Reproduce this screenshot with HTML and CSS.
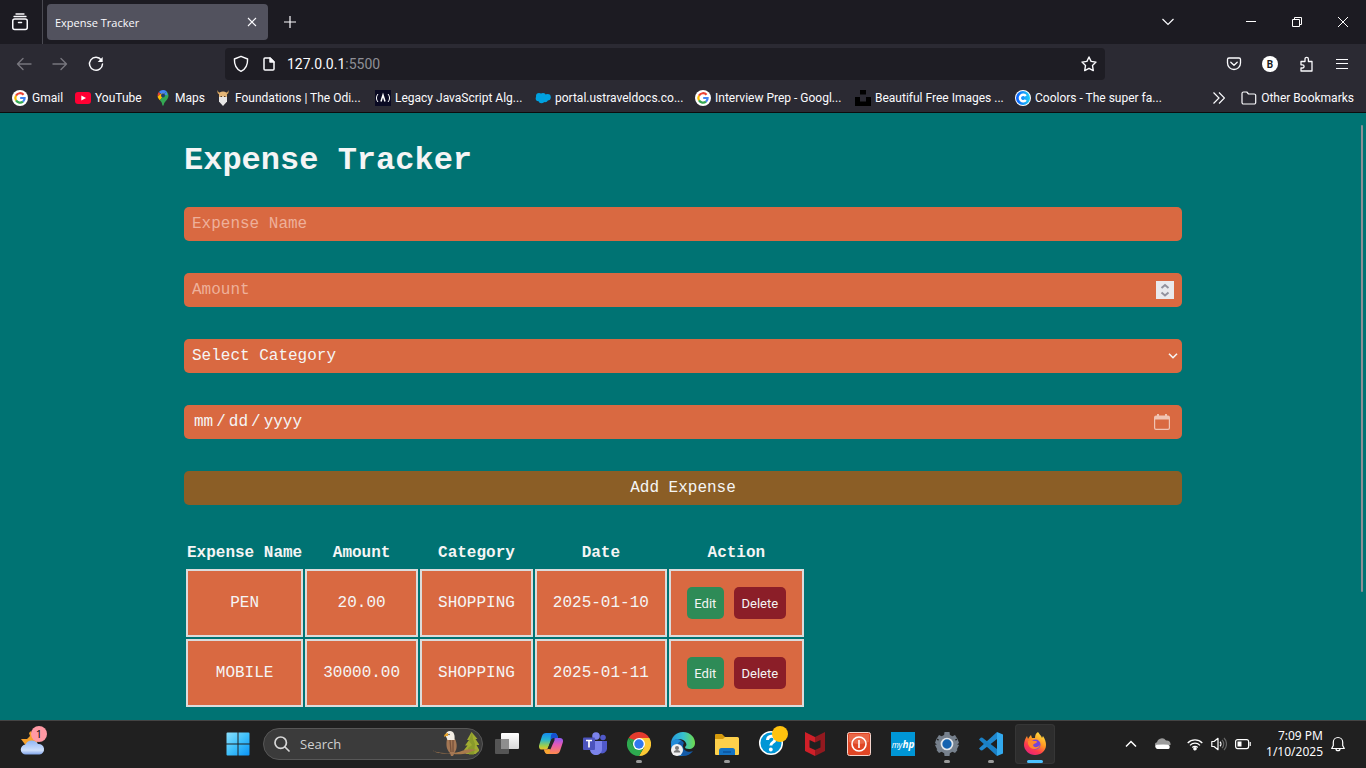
FILE: index.html
```html
<!DOCTYPE html>
<html lang="en">
<head>
<meta charset="utf-8">
<meta name="viewport" content="width=device-width, initial-scale=1">
<title>Expense Tracker</title>
<link rel="stylesheet" href="styles.css">
</head>
<body>
<header class="browser">
  <div class="titlebar">
    <button class="recent" aria-label="Recent browsing">
      <svg width="18" height="18" viewBox="0 0 18 18" fill="none" stroke="#fbfbfe" stroke-width="1.5" stroke-linecap="round"><rect x="1.75" y="6" width="14.5" height="10.5" rx="2"/><path d="M3 3.5h12M5 1h8" stroke-width="1.3"/><path d="M7.5 9.5h3"/></svg>
    </button>
    <div class="tab">
      <span class="tab-title">Expense Tracker</span>
      <button class="tab-close" aria-label="Close tab"><svg width="10" height="10" viewBox="0 0 10 10" stroke="#fbfbfe" stroke-width="1.1"><path d="M1 1l8 8M9 1l-8 8"/></svg></button>
    </div>
    <button class="new-tab" aria-label="New tab"><svg width="14" height="14" viewBox="0 0 14 14" stroke="#fbfbfe" stroke-width="1.2"><path d="M7 1v12M1 7h12"/></svg></button>
    <div class="window-controls">
      <button class="list-tabs" aria-label="List all tabs"><svg width="12" height="8" viewBox="0 0 12 8" fill="none" stroke="#fbfbfe" stroke-width="1.2"><path d="M.5 1L6 6.500 11.500 1"/></svg></button>
      <button aria-label="Minimize"><svg width="10" height="10" viewBox="0 0 10 10" fill="#fff"><path d="M0 4h10v1H0z"/></svg></button>
      <button aria-label="Restore"><svg width="10" height="10" viewBox="0 0 10 10" fill="none" stroke="#fff"><path d="M.5 2.500h7v7h-7zM2.500 2.500v-2h7v7h-2"/></svg></button>
      <button aria-label="Close"><svg width="10" height="10" viewBox="0 0 10 10" stroke="#fff"><path d="M0 0l10 10M10 0L0 10"/></svg></button>
    </div>
  </div>

  <div class="navbar">
    <button class="tool dim" aria-label="Back"><svg width="16" height="16" viewBox="0 0 16 16" fill="none" stroke="currentColor" stroke-width="1.4" stroke-linecap="round" stroke-linejoin="round"><path d="M15 8H1.500M7 2.500L1.500 8 7 13.500"/></svg></button>
    <button class="tool dim" aria-label="Forward"><svg width="16" height="16" viewBox="0 0 16 16" fill="none" stroke="currentColor" stroke-width="1.4" stroke-linecap="round" stroke-linejoin="round"><path d="M1 8h13.500M9 2.500L14.500 8 9 13.500"/></svg></button>
    <button class="tool" aria-label="Reload"><svg width="16" height="16" viewBox="0 0 16 16" fill="none" stroke="currentColor" stroke-width="1.5" stroke-linecap="round"><path d="M13.300 4A6.500 6.500 0 1 0 14.500 8"/><path d="M14.700 1v5H9.700z" fill="currentColor" stroke="none"/></svg></button>
    <div class="urlbar">
      <svg width="16" height="18" viewBox="0 0 16 18" fill="none" stroke="#fbfbfe" stroke-width="1.4" stroke-linejoin="round"><path d="M8 1.300L14.600 4c.2 6-1.600 10-6.600 12.400C3 14 1.200 10 1.400 4z"/></svg>
      <svg class="page-icon" width="12" height="14" viewBox="0 0 12 14" fill="none" stroke="#fbfbfe" stroke-width="1.5" stroke-linejoin="round"><path d="M1 2a1 1 0 0 1 1-1h5l4 4v7a1 1 0 0 1-1 1H2a1 1 0 0 1-1-1z"/><path d="M7 1v4h4z" fill="#fbfbfe"/></svg>
      <span class="url">127.0.0.1<span class="port">:5500</span></span>
      <button class="star" aria-label="Bookmark this page"><svg width="16" height="16" viewBox="0 0 16 16" fill="none" stroke="#fbfbfe" stroke-width="1.4" stroke-linejoin="round"><path d="M8 1l2.100 4.400 4.900.7-3.500 3.500.8 5L8 12.300l-4.300 2.300.8-5L1 6.100l4.900-.7z"/></svg></button>
    </div>
    <button class="tool" aria-label="Save to Pocket"><svg width="16" height="16" viewBox="0 0 16 16" fill="none" stroke="currentColor" stroke-width="1.3" stroke-linecap="round" stroke-linejoin="round"><path d="M3 2h10a1.500 1.500 0 0 1 1.500 1.500V7a6.500 6.500 0 0 1-13 0V3.500A1.500 1.500 0 0 1 3 2z"/><path d="M4.800 6.300L8 9.300l3.200-3"/></svg></button>
    <button class="tool" aria-label="Account"><span class="avatar">B</span></button>
    <button class="tool" aria-label="Extensions"><svg width="16" height="16" viewBox="0 0 16 16" fill="none" stroke="currentColor" stroke-width="1.300" stroke-linejoin="round"><path d="M3 5.500h4V3a1.700 1.700 0 0 1 3.400 0v2.500H14V15H3v-3h1.500a1.500 1.500 0 0 0 0-3.200H3z"/></svg></button>
    <button class="tool" aria-label="Menu"><svg width="12" height="12" viewBox="0 0 12 12" fill="currentColor"><path d="M0 1h12v1H0zM0 5h12v1H0zM0 10h12v1H0z"/></svg></button>
  </div>

  <nav class="bookmarks" aria-label="Bookmarks">
    <a class="bookmark" href="#"><svg width="16" height="16" viewBox="0 0 16 16"><circle cx="8" cy="8" r="8" fill="#fff"/><g fill="none" stroke-width="2.200"><path d="M11.600 4.800A4.700 4.700 0 0 0 4 5.600" stroke="#ea4335"/><path d="M4 5.600a4.700 4.700 0 0 0 0 4.800" stroke="#fbbc05"/><path d="M4 10.400a4.700 4.700 0 0 0 7 1.200" stroke="#34a853"/><path d="M11 11.600A4.500 4.500 0 0 0 12.600 8H8.200" stroke="#4285f4"/></g></svg><span>Gmail</span></a>
    <a class="bookmark bookmark-mid" href="#"><svg width="16" height="16" viewBox="0 0 16 16"><rect y="2" width="16" height="12" rx="3" fill="#ff0033"/><path d="M6.300 5.400v5.200L11 8z" fill="#fff"/></svg><span>YouTube</span></a>
    <a class="bookmark bookmark-short" href="#"><svg width="16" height="16" viewBox="0 0 16 16"><path d="M8 0a5.500 5.500 0 0 0-4.200 2L8 5.500l3.500-4.300A5.500 5.500 0 0 0 8 0z" fill="#4285f4"/><path d="M3.800 2A5.500 5.500 0 0 0 2.600 6.500L5.600 4z" fill="#ea4335"/><path d="M2.600 6.500c.3 1.700 1.300 2.600 2.300 3.800L10 4.500 8 3.500 5.600 4z" fill="#fbbc04"/><path d="M11.500 1.200L4.900 10.300C6.600 12.300 7 13 7.300 15c.2 1 1.200 1 1.400 0 .5-3.600 4.800-5.300 4.800-9.500a5.500 5.500 0 0 0-2-4.300z" fill="#34a853"/><path d="M11.500 1.200L9 4.500l3.500 1z" fill="#4285f4"/><circle cx="8" cy="5.400" r="2" fill="#203c6b"/></svg><span>Maps</span></a>
    <a class="bookmark bookmark-long" href="#"><svg width="16" height="16" viewBox="0 0 16 16"><path d="M2.500 0C2 3 3 4 4.500 4.500h7C13 4 14 3 13.500 0 12.800 2 12 2.600 10.500 2.500h-5C4 2.600 3.200 2 2.500 0z" fill="#d4a05a"/><path d="M4 5a4 3.500 0 0 1 8 0v3H4z" fill="#e5b678"/><path d="M4 7l4-.5 4 .5v4.500L8 16l-4-4.500z" fill="#e8e6e6"/><path d="M5.500 6h1.500v1H5.500zM9 6h1.500v1H9z" fill="#5c4026"/></svg><span>Foundations | The Odi...</span></a>
    <a class="bookmark bookmark-long" href="#"><svg width="16" height="16" viewBox="0 0 16 16"><path d="M0 0h16v16H0z" fill="#0a0a23"/><g fill="none" stroke="#fff" stroke-width="1"><path d="M3 4C1 6.500 1 9.500 3 12M13 4c2 2.500 2 5.500 0 8"/><path d="M6 11.500L8 5l2 6.500M8 5v3" stroke-width="1.500"/></g></svg><span>Legacy JavaScript Alg...</span></a>
    <a class="bookmark bookmark-long" href="#"><svg width="16" height="16" viewBox="0 0 16 16" fill="#00a1e0"><circle cx="4" cy="6" r="3"/><circle cx="8" cy="5.800" r="2.800"/><circle cx="12.600" cy="7.300" r="3.200"/><circle cx="3.400" cy="8.500" r="2.700"/><circle cx="6.500" cy="10.300" r="3"/><circle cx="10" cy="9.500" r="2.800"/></svg><span>portal.ustraveldocs.co...</span></a>
    <a class="bookmark bookmark-long" href="#"><svg width="16" height="16" viewBox="0 0 16 16"><circle cx="8" cy="8" r="8" fill="#fff"/><g fill="none" stroke-width="2.200"><path d="M11.600 4.800A4.700 4.700 0 0 0 4 5.600" stroke="#ea4335"/><path d="M4 5.600a4.700 4.700 0 0 0 0 4.800" stroke="#fbbc05"/><path d="M4 10.400a4.700 4.700 0 0 0 7 1.200" stroke="#34a853"/><path d="M11 11.600A4.500 4.500 0 0 0 12.600 8H8.200" stroke="#4285f4"/></g></svg><span>Interview Prep - Googl...</span></a>
    <a class="bookmark bookmark-long" href="#"><svg width="16" height="16" viewBox="0 0 16 16"><path d="M5 0h6v4.500H5zM0 7h5v4.500h6V7h5v9H0z" fill="#000"/></svg><span>Beautiful Free Images ...</span></a>
    <a class="bookmark bookmark-long" href="#"><svg width="16" height="16" viewBox="0 0 16 16"><defs><linearGradient id="coolors"><stop stop-color="#0a5cff"/><stop offset="1" stop-color="#20d0f5"/></linearGradient></defs><circle cx="8" cy="8" r="8" fill="#fff"/><circle cx="8" cy="8" r="7" fill="url(#coolors)"/><path d="M10.800 6A3.300 3.300 0 1 0 10.800 10" fill="none" stroke="#fff" stroke-width="2.400"/></svg><span>Coolors - The super fa...</span></a>
    <button class="more" aria-label="More bookmarks"><svg width="12" height="12" viewBox="0 0 12 12" fill="none" stroke="#fbfbfe" stroke-width="1.200"><path d="M.5.500L6 6 .5 11.500M6 .5L11.500 6 6 11.500"/></svg></button>
    <a class="bookmark bookmark-folder" href="#"><svg width="16" height="16" viewBox="0 0 16 16" fill="none" stroke="#fbfbfe" stroke-width="1.200" stroke-linejoin="round"><path d="M1 3.500A1.500 1.500 0 0 1 2.500 2h3.300L7.500 4h5.700A1.500 1.500 0 0 1 14.700 5.500v7a1.500 1.500 0 0 1-1.500 1.500H2.500A1.500 1.500 0 0 1 1 12.500z"/></svg><span>Other Bookmarks</span></a>
  </nav>
</header>

<main class="page">
  <div class="container">
    <h1>Expense Tracker</h1>
    <form class="expense-form">
      <div class="field"><input class="control" type="text" placeholder="Expense Name" aria-label="Expense Name"></div>
      <div class="field">
        <input class="control" type="number" placeholder="Amount" aria-label="Amount">
        <svg class="field-icon spinner" width="18" height="18" viewBox="0 0 18 18" fill="none" stroke="#92919d" stroke-width="2"><path d="M0 0h18v18H0z" fill="#e9e9ed" stroke="none"/><path d="M5.500 7L9 4l3.500 3M5.500 11.500L9 14.500l3.500-3"/></svg>
      </div>
      <div class="field">
        <select class="control" aria-label="Category"><option>Select Category</option><option>SHOPPING</option></select>
        <svg class="field-icon arrow" width="10" height="6" viewBox="0 0 10 6" fill="none" stroke="#f5f5f5" stroke-width="1.600"><path d="M1 .700L5 4.700 9 .700"/></svg>
      </div>
      <div class="field">
        <input class="control date" type="date" aria-label="Date">
        <svg class="field-icon calendar" width="16" height="16" viewBox="0 0 16 16" fill="#f0c3b3"><path fill-rule="evenodd" d="M3 0h2v1.500h6V0h2v1.500h1a2 2 0 0 1 2 2V14a2 2 0 0 1-2 2H2a2 2 0 0 1-2-2V3.500a2 2 0 0 1 2-2h1zM1.200 5.500V14a.8.8 0 0 0 .8.800h12a.8.8 0 0 0 .8-.8V5.500z"/></svg>
      </div>
      <button class="control submit" type="button">Add Expense</button>
    </form>

    <table class="expenses">
      <thead>
        <tr><th>Expense Name</th><th>Amount</th><th>Category</th><th>Date</th><th>Action</th></tr>
      </thead>
      <tbody>
        <tr><td>PEN</td><td>20.00</td><td>SHOPPING</td><td>2025-01-10</td><td><div class="actions"><button class="action edit">Edit</button><button class="action delete">Delete</button></div></td></tr>
        <tr><td>MOBILE</td><td>30000.00</td><td>SHOPPING</td><td>2025-01-11</td><td><div class="actions"><button class="action edit">Edit</button><button class="action delete">Delete</button></div></td></tr>
      </tbody>
    </table>
  </div>
  <div class="scroll-thumb"></div>
</main>

<footer class="taskbar">
  <div class="widgets">
    <button class="weather" aria-label="Weather">
      <svg width="26" height="26" viewBox="0 0 26 26"><defs><linearGradient id="cloud" x2="0" y2="1"><stop stop-color="#8fb5f5"/><stop offset=".7" stop-color="#cfe0fb"/><stop offset="1" stop-color="#7fa3e8"/></linearGradient></defs><path d="M11 2l2 5 6 1-3 9H6l-2-3-3-4 6 0 3-3-1-3z" fill="#f5a12c"/><path d="M6 25.500a5 5 0 0 1-.5-10A7 7 0 0 1 18 15a5.300 5.300 0 0 1 1.500 10.500z" fill="url(#cloud)"/></svg>
      <span class="badge">1</span>
    </button>
  </div>
  <div class="apps">
    <button class="app" aria-label="Start"><svg width="24" height="24" viewBox="0 0 24 24"><defs><linearGradient id="win" x2="1" y2="1"><stop stop-color="#8be0fd"/><stop offset=".5" stop-color="#3fc0fb"/><stop offset="1" stop-color="#0a93f5"/></linearGradient></defs><path d="M.500 1.500a1 1 0 0 1 1-1h10v11H.5zM12.500.5h10a1 1 0 0 1 1 1v10h-11zM.5 12.500h11v11h-10a1 1 0 0 1-1-1zM12.500 12.500h11v10a1 1 0 0 1-1 1h-10z" fill="url(#win)"/></svg></button>
    <label class="search">
      <svg width="16" height="16" viewBox="0 0 16 16" fill="none" stroke="#d8d8d8" stroke-width="1.700" stroke-linecap="round"><circle cx="6.700" cy="6.700" r="5.700"/><path d="M11 11l4 4"/></svg>
      <input type="text" placeholder="Search" aria-label="Search">
      <svg width="46" height="26" viewBox="0 0 46 26"><path d="M38.500 1l6 7-2 0 4 6-3 0 3 5.500-4 3.500H33l-2-4 3.500-4.500h-2.500l4-5.500h-2z" fill="#a0ac31"/><path d="M39 1l1 7 2 5-1 11h-5l-1-7 4-3-3-4z" fill="#7c8d28" opacity=".6"/><path d="M0 20c10 3 22 3 30-.5 5-2 10-1.500 15-.5-7 0-9 4-15 4-8 1-11-1-17-.5-5 0-9 0-13-3z" fill="#a8794c"/><path d="M14 8h8c2.500 5 2 10 0 13l-1 2-1 2h-2l-1-3c-4-4-4-9-3-14z" fill="#a47754"/><path d="M17 9l1 12M20 9l0 12" stroke="#77513a" stroke-width="1.300"/><path d="M12.500 4.500C12.500 2 14.500 0 17 0c4 0 5 4 4.500 9H14.500z" fill="#f4eee4"/><path d="M15 2c-2 0-4 1-4 4 1-1 2-1 4-1z" fill="#e6a42c"/><circle cx="16" cy="3.500" r=".7" fill="#222"/></svg>
    </label>
    <button class="app" aria-label="Task View"><svg width="24" height="24" viewBox="0 0 24 24"><defs><linearGradient id="tv" x2="0" y2="1"><stop stop-color="#fff"/><stop offset="1" stop-color="#d8d8d8"/></linearGradient></defs><rect x="6" y="1" width="18" height="16" rx="1" fill="url(#tv)"/><rect y="7" width="14" height="15" rx="1" fill="#555"/><path d="M6 7h8v10H6z" fill="#8e8e8e"/></svg></button>
    <button class="app" aria-label="Copilot"><svg width="24" height="24" viewBox="0 0 24 24"><defs><linearGradient id="cpa" x2="0" y2="1"><stop stop-color="#148cf0"/><stop offset=".4" stop-color="#26b5d0"/><stop offset=".8" stop-color="#a6cf45"/><stop offset="1" stop-color="#f0c02c"/></linearGradient><linearGradient id="cpb" x2="0" y2="1"><stop stop-color="#8a5cf5"/><stop offset=".4" stop-color="#e458b8"/><stop offset="1" stop-color="#ff8a4c"/></linearGradient></defs><path d="M7 1h8c2 0 3 1 3.500 3L19 6h-4c-2 0-3 1-3.500 3L9.500 15c-.7 2-1.500 2.500-3.500 2.500H3c-2.500 0-3.500-2-2.800-4.500L3 4c.7-2 2-3 4-3z" fill="url(#cpa)"/><path d="M15 1c2 0 3 1 3.500 3L19 6h-4c-2 0-3 1-3.500 3l.3-4.500C12 2.500 13 1 15 1z" fill="#154fd0"/><path d="M17 22H9c-2 0-3-1-3.500-3L5 17.500h3c2 0 3-1 3.500-3l2.500-6C14.700 6.500 16 6 18 6h3c2.500 0 3.500 2 2.800 4.500L21 19c-.7 2-2 3-4 3z" fill="url(#cpb)"/><path d="M9 22c-2 0-3-1-3.500-3L5 17.500h3c2 0 3-1 3.500-3l-.5 5c0 1.500-1 2.500-2 2.500z" fill="#f8a630"/><path d="M14.500 7L10 17" stroke="#262626" stroke-width="3"/></svg></button>
    <button class="app" aria-label="Teams"><svg width="24" height="24" viewBox="0 0 24 24"><circle cx="20" cy="5.500" r="2.800" fill="#5059c9"/><path d="M16 9h8v8a5 5 0 0 1-7 4z" fill="#5059c9"/><circle cx="13" cy="4" r="3.800" fill="#7b83eb"/><path d="M7 9h12v8c0 8-12 8-12 0z" fill="#7b83eb"/><rect y="5.500" width="12" height="12.500" rx="1" fill="#4b53bc"/><path d="M3 8.500h6M6 8.500v7" stroke="#fff" stroke-width="1.700"/></svg></button>
    <button class="app running" aria-label="Chrome"><svg width="24" height="24" viewBox="0 0 24 24"><path d="M12 12L1.600 6A12 12 0 0 1 22.400 6z" fill="#e33b2e"/><path d="M12 12V6h10.400A12 12 0 0 1 12 24l5.200-9z" fill="#fcc934"/><path d="M12 12l5.200 3L12 24A12 12 0 0 1 1.600 6l5.200 9z" fill="#2da94f"/><path d="M1.600 6L6.800 15 8 8z" fill="#2da94f"/><circle cx="12" cy="12" r="6" fill="#fff"/><circle cx="12" cy="12" r="4.700" fill="#3078ee"/></svg></button>
    <button class="app" aria-label="Edge"><svg width="24" height="24" viewBox="0 0 24 24"><defs><linearGradient id="ea"><stop stop-color="#2598dc"/><stop offset=".5" stop-color="#35c1d0"/><stop offset="1" stop-color="#6edb4b"/></linearGradient></defs><path d="M0 12c0 8 6 12 12 12 4 0 8-2 10-5-4 2-10 0-10-5 0-2 1-3 1-3C9 5 1 7 0 12z" fill="#135ba8"/><path d="M0 12C0 5 5 0 12 0c8 0 12 6 12 11 0 4-3 6-6 6-3 0-4-1-4-2 1-1 2-2 1-4-2-5-12-6-15 1z" fill="url(#ea)"/><path d="M0 12c2-6 8-6 10-3-3 1-5 5-4 9 1 3 3 5 6 6C5 24 0 19 0 12z" fill="#208bd9"/><circle cx="6" cy="18" r="6" fill="#f1f1f1"/><circle cx="6" cy="16" r="2" fill="#777"/><path d="M2.700 20.500a3.300 2.600 0 0 1 6.600 0z" fill="#777"/></svg></button>
    <button class="app running" aria-label="File Explorer"><svg width="24" height="24" viewBox="0 0 24 24"><path d="M0 3a1 1 0 0 1 1-1h6l3 3v4H0z" fill="#d59a0c"/><path d="M0 7h8l2-2h12.500A1.500 1.500 0 0 1 24 6.500V22a1 1 0 0 1-1 1H1a1 1 0 0 1-1-1z" fill="#fdd04b"/><path d="M4 23v-4.500A2.500 2.500 0 0 1 6.500 16h11a2.500 2.500 0 0 1 2.500 2.500V23z" fill="#1473c4"/><path d="M8 20h8" stroke="#0a529e" stroke-width="1.500"/></svg></button>
    <button class="app" aria-label="HP Support"><svg class="help" width="30" height="30" viewBox="0 0 30 30"><circle cx="13" cy="17" r="11.300" fill="#0096d6" stroke="#fff" stroke-width="1.500"/><path d="M9.500 14c.3-5 7.500-5 7.500-.8 0 3.300-4.200 3-4.200 6.200" fill="none" stroke="#fff" stroke-width="3"/><circle cx="12.800" cy="23.500" r="1.900" fill="#fff"/><circle cx="22" cy="8" r="8" fill="#ffc20e"/></svg></button>
    <button class="app" aria-label="McAfee"><svg width="24" height="24" viewBox="0 0 24 24"><path d="M2 0l10 5v5.500L6.500 8v7.500L12 18v6L2 19z" fill="#d01f28"/><path d="M22 0L12 5v5.500L17.500 8v7.500L12 18v6l10-5z" fill="#92191f"/></svg></button>
    <button class="app" aria-label="Power"><svg width="24" height="24" viewBox="0 0 24 24"><rect x=".500" y=".500" width="23" height="23" rx="2" fill="#e04625" stroke="#f4d5cd"/><path d="M2 2h20v8Q12 14 2 10z" fill="#ee7d5f" opacity=".6"/><circle cx="12" cy="12" r="7" fill="none" stroke="#fff" stroke-width="1.600"/><path d="M12 8v8" stroke="#fff" stroke-width="1.600"/></svg></button>
    <button class="app" aria-label="myHP"><span class="myhp">my<b>hp</b></span></button>
    <button class="app running" aria-label="Settings"><svg width="24" height="24" viewBox="0 0 24 24"><circle cx="12" cy="12" r="9.500" fill="#77818d"/><path d="M9.500 0h5l.5 4H9zM9.500 24h5l.5-4H9zM22.500 6.500L24 11l-4 3-2-6zM24 13l-2.500 5-4-2 2-5zM1.500 6.500L0 11l4 3 2-6zM0 13l2.500 5 4-2-2-5zM4 3l4 2-4 5-2.500-3zM20 3l-4 2 4 5 2.500-3zM4 21l4-2-4-4-2.500 3zM20 21l-4-2 4-4 2.500 3z" fill="#77818d"/><circle cx="12" cy="12" r="5.500" fill="#1563b0" stroke="#e3e7eb" stroke-width="1.700"/></svg></button>
    <button class="app running" aria-label="Visual Studio Code"><svg width="24" height="24" viewBox="0 0 24 24"><path d="M18 0v7L3.500 18.300 2 18.500l-2-2 1-1z" fill="#2088cf"/><path d="M18 24v-7L3.500 5.700 2 5.500l-2 2 1 1z" fill="#1a80c6"/><path d="M18 0l6 2.500v19L18 24z" fill="#32a9ee"/></svg></button>
    <button class="app active" aria-label="Firefox"><svg width="24" height="24" viewBox="0 0 24 24"><defs><linearGradient id="ff" x1=".8" x2=".2" y2="1"><stop stop-color="#ffe644"/><stop offset=".4" stop-color="#ff9a22"/><stop offset=".7" stop-color="#ff3b4c"/><stop offset="1" stop-color="#e52080"/></linearGradient></defs><path d="M15 0c1 2 3 3 4 6l1-2c2 3 3 6 3 9 0 6-5 10-11 10S1 18 1 13c0-3 1-6 3-9l1 3c1-2 2-3 3-4l1 3h3c0-3 1-5 3-6z" fill="url(#ff)"/><circle cx="12.500" cy="12.500" r="5" fill="#7545d8"/><path d="M5 9c3-1 5 0 7 0 1 0 2 0 2 1-1 2-3 1-4 3 1 3 4 3 7 0-1 5-10 6-12-1z" fill="#ff8a2c"/></svg></button>
  </div>
  <div class="tray">
    <button class="tray-up" aria-label="Show hidden icons"><svg width="12" height="8" viewBox="0 0 12 8" fill="none" stroke="#fff" stroke-width="1.500"><path d="M1 6.500l5-5 5 5"/></svg></button>
    <svg width="16" height="16" viewBox="0 0 16 16"><path d="M2 12a3 3 0 0 1 0-5.800A5 5 0 0 1 11 4.500 3.800 3.800 0 0 1 15.500 9z" fill="#9b9b9b"/><path d="M2.500 13a2.300 2.300 0 0 1-1-4.200L8 8.500l5 .2a2.300 2.300 0 0 1 .5 4.300z" fill="#fff"/></svg>
    <div class="status">
      <svg width="16" height="16" viewBox="0 0 16 16" fill="none" stroke="#fff" stroke-width="1.200"><path d="M.7 7a10.300 10.300 0 0 1 14.600 0M3 9.300a7 7 0 0 1 10 0M5.300 11.500a3.800 3.800 0 0 1 5.400 0"/><circle cx="8" cy="12.700" r="1.200" fill="#fff"/></svg>
      <svg width="16" height="16" viewBox="0 0 16 16" fill="none" stroke="#fff" stroke-width="1.200" stroke-linejoin="round"><path d="M.8 5.500H3L7 2.300v11.400L3 10.500H.8zM9 5.800a3 3 0 0 1 0 4.400"/><path d="M11 3.800a6 6 0 0 1 0 8.400M13 2a8.500 8.500 0 0 1 0 12" stroke="#666"/></svg>
      <svg width="16" height="16" viewBox="0 0 16 16" fill="none" stroke="#fff" stroke-width="1.200"><rect x=".600" y="3.600" width="13" height="9" rx="2"/><path d="M2.500 5.500h4v5h-4z" fill="#fff" stroke="none"/><path d="M15.200 6v4"/></svg>
    </div>
    <time class="clock" datetime="2025-01-10T19:09"><span>7:09 PM</span><span>1/10/2025</span></time>
    <button class="bell" aria-label="Notifications"><svg width="16" height="16" viewBox="0 0 16 16" fill="none" stroke="#fff" stroke-width="1.200" stroke-linejoin="round"><path d="M8 1.500a4.700 4.700 0 0 0-4.700 4.700V9.500L1.700 12.500h12.600L12.700 9.500V6.200A4.700 4.700 0 0 0 8 1.500zM6 12.700a2 2 0 0 0 4 0"/></svg></button>
  </div>
</footer>
</body>
</html>
```
FILE: styles.css
```css
*,
*::before,
*::after {
  box-sizing: border-box;
}

body {
  margin: 0;
  height: 100vh;
  display: flex;
  flex-direction: column;
  overflow: hidden;
  font-family: "Noto Sans", "Open Sans", sans-serif;
  font-size: 12px;
  color: #fbfbfe;
}

button {
  border: 0;
  padding: 0;
  background: none;
  color: inherit;
  font: inherit;
}

svg {
  display: block;
  flex: none;
}

/* Browser chrome */
.browser {
  background: #2b2a33;
  border-bottom: 1px solid #0c0c0d;
  font-family: Roboto, "Noto Sans", sans-serif;
}

.titlebar {
  display: flex;
  align-items: center;
  height: 44px;
  background: #1c1b22;
}

.titlebar button {
  display: grid;
  place-items: center;
}

.titlebar .recent {
  width: 43px;
  height: 44px;
  padding-right: 3px;
  border-right: 1px solid #4a4a52;
}

.tab {
  display: flex;
  align-items: center;
  justify-content: space-between;
  width: 221px;
  height: 36px;
  margin-left: 4px;
  padding: 0 6px 0 8px;
  border-radius: 4px;
  background: #52525e;
}

.tab-title {
  font-family: "Open Sans", "Noto Sans", sans-serif;
  font-size: 11px;
}

.tab-close {
  width: 20px;
  height: 20px;
}

.new-tab {
  width: 36px;
  height: 36px;
  margin-left: 4px;
}

.window-controls {
  display: flex;
  margin-left: auto;
}

.window-controls button {
  width: 46px;
  height: 44px;
}

.window-controls .list-tabs {
  width: 36px;
  margin-right: 42px;
}

.navbar {
  display: flex;
  align-items: center;
  height: 40px;
  padding: 0 6px;
}

.tool {
  display: grid;
  place-items: center;
  width: 36px;
  height: 32px;
}

.dim {
  color: #77767e;
}

.urlbar {
  display: flex;
  align-items: center;
  flex: 1;
  height: 32px;
  margin: 0 111px;
  padding: 0 8px;
  border-radius: 4px;
  background: #1e1d24;
}

.page-icon {
  margin: 0 12px 0 14px;
}

.url {
  font-size: 14px;
}

.port {
  color: #8f8f96;
}

.star {
  margin-left: auto;
}

.avatar {
  display: grid;
  place-items: center;
  width: 16px;
  height: 16px;
  border-radius: 50%;
  background: #fff;
  color: #1c1b22;
  font-size: 10px;
  font-weight: 700;
}

.bookmarks {
  display: flex;
  align-items: center;
  height: 28px;
  padding: 0 12px;
}

.bookmark {
  display: flex;
  align-items: center;
  gap: 4px;
  flex: none;
  width: 63px;
  color: inherit;
  text-decoration: none;
  white-space: nowrap;
}

.bookmark-short {
  width: 60px;
}

.bookmark-mid {
  width: 80px;
}

.bookmark-long {
  width: 160px;
}

.more {
  margin-left: auto;
  margin-right: 16px;
}

.bookmark-folder {
  width: auto;
}

/* Page */
.page {
  position: relative;
  flex: 1;
  min-height: 0;
  overflow: hidden;
  background: #007373;
  color: #f5f5f5;
  font-family: "Courier New", "Liberation Mono", monospace;
  font-size: 16px;
}

.container {
  width: calc(100% - 64px);
  max-width: 998px;
  margin: 0 auto;
  padding-top: 30px;
}

h1 {
  margin: 0 0 28px;
  font-size: 32px;
  line-height: 36px;
}

.expense-form {
  display: grid;
  gap: 32px;
}

.field {
  position: relative;
}

.control {
  display: block;
  width: 100%;
  height: 34px;
  padding: 8px;
  border: 0;
  border-radius: 5px;
  outline: 0;
  appearance: none;
  background: #d96941;
  color: #f5f5f5;
  font: 16px/18px "Courier New", "Liberation Mono", monospace;
}

.date {
  padding-left: 9px;
}

.control::placeholder {
  color: #eeb09a;
}

.control::-webkit-inner-spin-button,
.control::-webkit-calendar-picker-indicator {
  opacity: 0;
}

.control::-webkit-datetime-edit-text {
  padding: 0 2px;
}

.field-icon {
  position: absolute;
  top: 0;
  bottom: 0;
  margin: auto 0;
  pointer-events: none;
}

.spinner {
  right: 8px;
}

.arrow {
  right: 4px;
}

.calendar {
  right: 12px;
}

.submit {
  background: #8b5e26;
}

.expenses {
  margin-top: 36px;
  border-spacing: 2px;
  text-align: center;
  line-height: 18px;
}

.expenses th {
  padding: 1px 1px 5px;
}

.expenses td {
  padding: 16px;
  border: 2px solid #dcdcdc;
  background: #d96941;
}

.actions {
  display: flex;
  gap: 10px;
}

.action {
  height: 32px;
  border-radius: 5px;
  color: #f5f5f5;
  font: 13px Roboto, "Noto Sans", sans-serif;
}

.edit {
  width: 37px;
  background: #2e8b57;
}

.delete {
  width: 52px;
  background: #8b1e28;
}

.scroll-thumb {
  position: absolute;
  top: 12px;
  right: 3px;
  width: 2px;
  height: 77%;
  border-radius: 1px;
  background: #8f8f94;
}

/* Taskbar */
.taskbar {
  display: flex;
  align-items: center;
  height: 48px;
  background: #202020;
  box-shadow: inset 0 1px #444;
}

.widgets {
  width: 216px;
  padding: 0 0 4px 20px;
}

.weather {
  position: relative;
  display: block;
}

.badge {
  position: absolute;
  top: -3px;
  right: -1px;
  width: 16px;
  height: 16px;
  border-radius: 50%;
  background: #ff99a4;
  color: #111;
  font-size: 11px;
  line-height: 16px;
}

.apps {
  display: flex;
  align-items: center;
}

.app {
  position: relative;
  display: grid;
  place-items: center;
  width: 40px;
  height: 40px;
  margin: 0 2px;
  border-radius: 4px;
}

.running::after,
.active::after {
  content: "";
  position: absolute;
  left: 17px;
  bottom: 1px;
  width: 6px;
  height: 3px;
  border-radius: 2px;
  background: #9a9a9a;
}

.active {
  background: #2d2d2d;
  box-shadow: inset 0 0 0 1px #363636;
}

.active::after {
  left: 12px;
  width: 16px;
  background: #4cc2ff;
}

.help {
  margin: -6px -4px 0 0;
}

.myhp {
  width: 24px;
  height: 24px;
  background: #0096d6;
  color: #fff;
  font-size: 8px;
  font-style: italic;
  line-height: 24px;
  white-space: nowrap;
}

.myhp b {
  font-size: 10px;
}

.search {
  display: flex;
  align-items: center;
  width: 220px;
  height: 32px;
  margin: 0 2px 0 3px;
  padding: 0 3px 0 10px;
  border: 1px solid #575757;
  border-radius: 16px;
  background: #3b3b3b;
}

.search input {
  flex: 1;
  min-width: 0;
  padding: 0 0 0 10px;
  border: 0;
  outline: 0;
  background: none;
  color: #d8d8d8;
  font: 13px "Open Sans", "Noto Sans", sans-serif;
}

.search input::placeholder {
  color: #d0d0d0;
}

.tray {
  display: flex;
  align-items: center;
  margin-left: auto;
  padding-right: 20px;
}

.tray-up {
  margin-right: 18px;
}

.status {
  display: flex;
  gap: 8px;
  margin: 0 16px;
}

.clock {
  display: flex;
  flex-direction: column;
  align-items: flex-end;
  width: 56px;
  margin-right: 7px;
  line-height: 16px;
  white-space: nowrap;
}
```
